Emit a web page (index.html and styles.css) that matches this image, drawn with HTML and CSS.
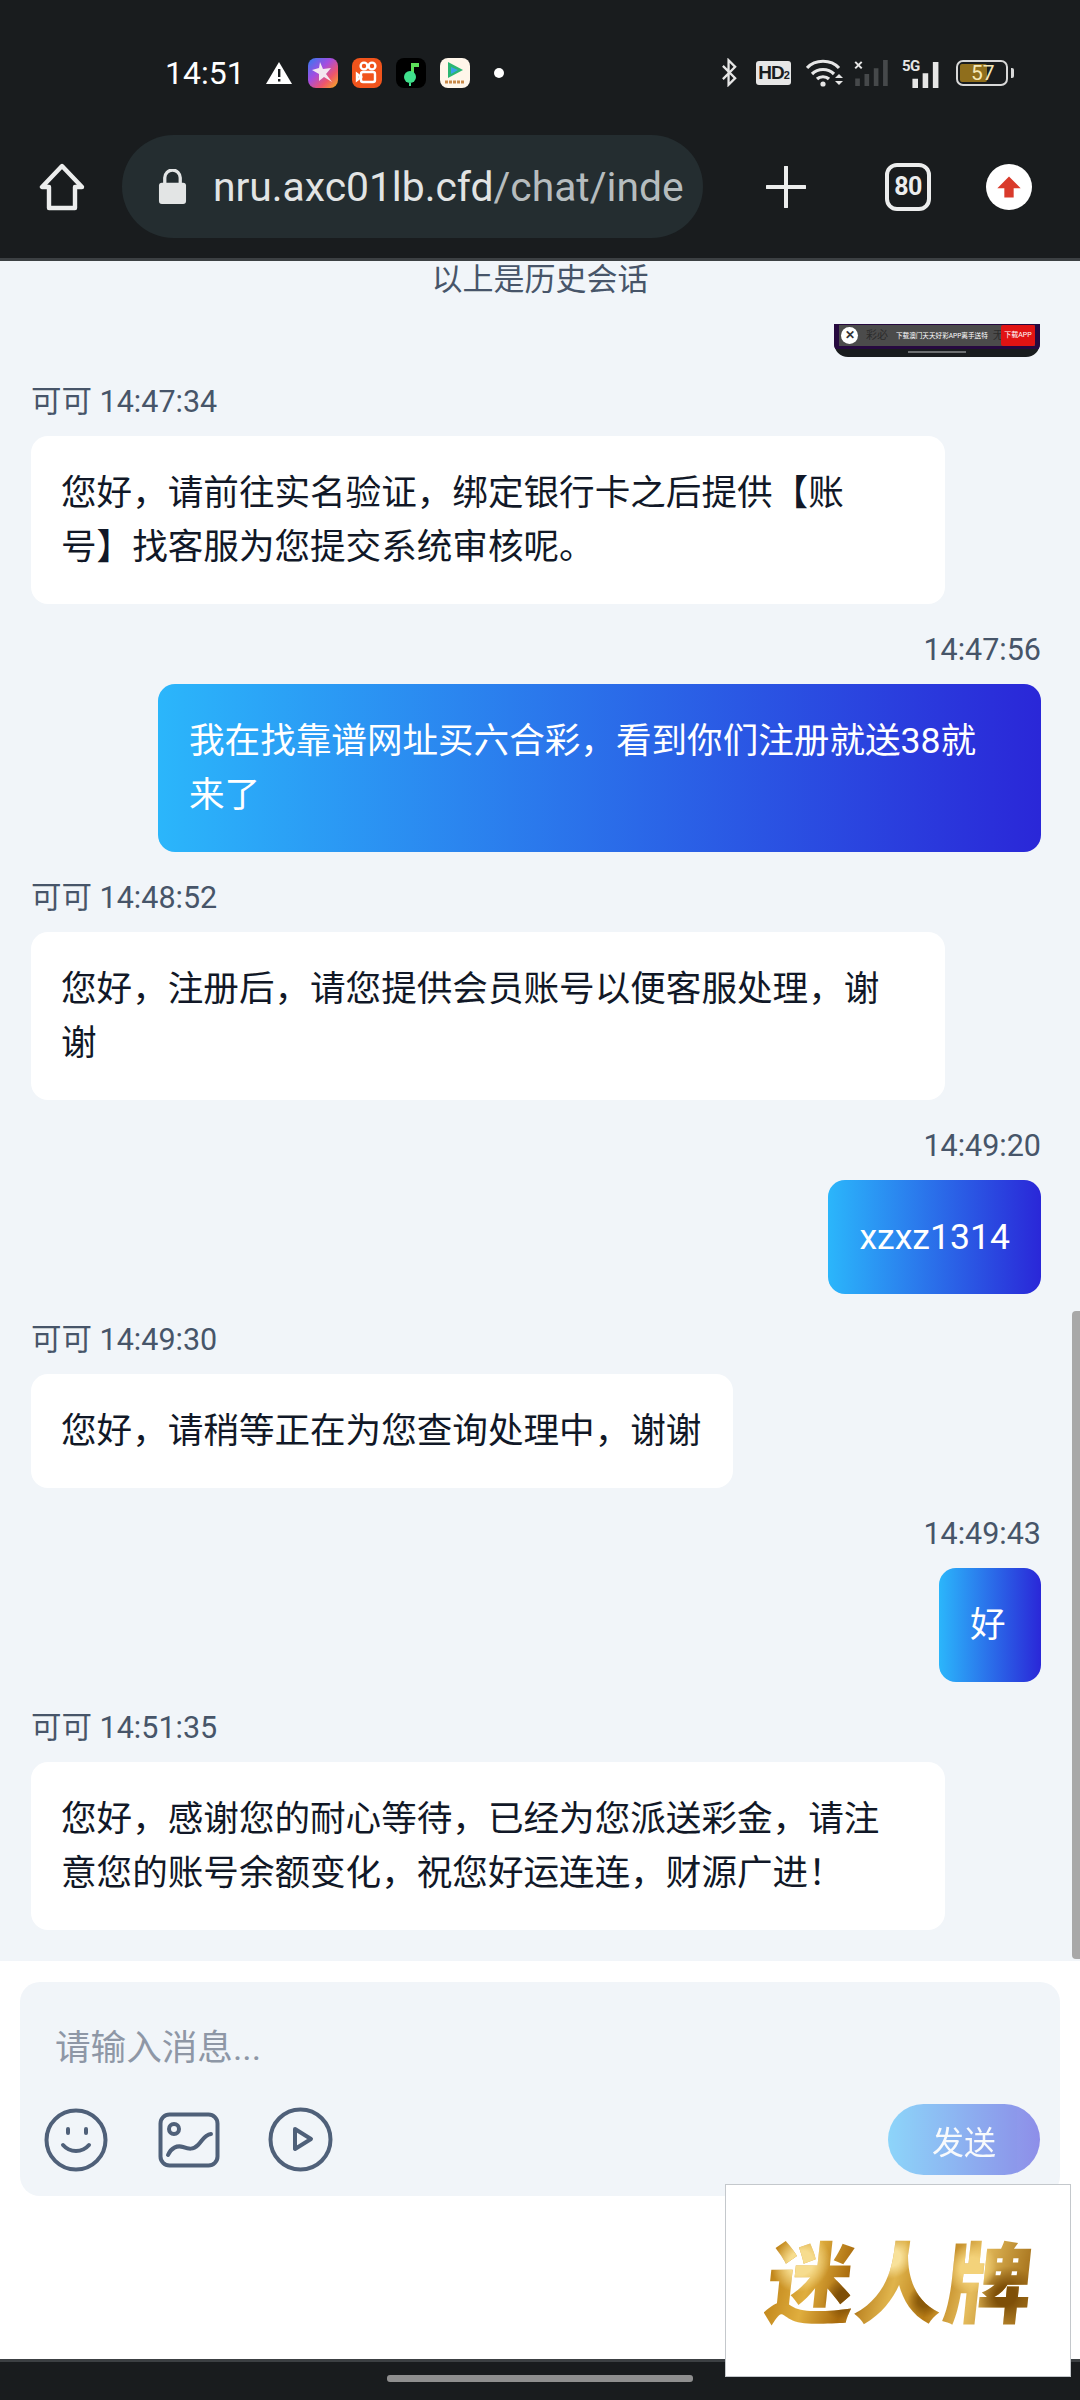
FILE: index.html
```html
<!DOCTYPE html>
<html lang="zh-CN">
<head>
<meta charset="UTF-8">
<meta name="viewport" content="width=device-width, initial-scale=1.0">
<title>在线客服</title>
<link rel="stylesheet" href="styles.css">
</head>
<body>

<header class="browser-top">
  <div class="status-bar">
    <span class="clock">14:51</span>
    <svg class="warn" viewBox="0 0 26 22"><path d="M13 0 26 22H0Z" fill="#fff"/><path d="M12 7h2.4v8H12ZM12 17h2.4v2.6H12Z" fill="#191c1e"/></svg>
    <div class="notif-icons">
      <span class="app app-star">
        <svg viewBox="0 0 30 30"><path d="M12 4l3 7 8-1-5 6 6 8-8-5-5 4 0-7-7-4 7-2Z" fill="#f3e6ef"/></svg>
      </span>
      <span class="app app-orange">
        <svg viewBox="0 0 30 30" fill="none" stroke="#fff" stroke-width="2.4"><circle cx="12" cy="8" r="3.4"/><circle cx="20" cy="8" r="3.4"/><rect x="9" y="14" width="14" height="10" rx="2"/><path d="M9 19 5 16v6Z"/></svg>
      </span>
      <span class="app app-black">
        <svg viewBox="0 0 30 30"><path d="M15 5h8v4h-5v10h-3Z" fill="#5de05a"/><circle cx="14" cy="19" r="6" fill="#3fe08c"/><path d="M14 25v3" stroke="#3fe08c" stroke-width="2"/></svg>
      </span>
      <span class="app app-white">
        <svg viewBox="0 0 30 30"><path d="M8 4 23 12 8 20Z" fill="#2bb673"/><path d="M11 9l7 3-7 4Z" fill="#3aa0e8"/><path d="M5 24h20" stroke="#c98a4a" stroke-width="3" stroke-dasharray="3 1"/></svg>
      </span>
    </div>
    <span class="dot"></span>

    <div class="sys-icons">
      <svg class="ic-bt" viewBox="0 0 18 30" fill="none" stroke="#e6e6e6" stroke-width="2.4"><path d="M2 8 15 21 8 28V2l7 7L2 22"/></svg>
      <span class="hd">HD<small>2</small></span>
      <svg class="ic-wifi" viewBox="0 0 38 30" fill="none" stroke="#e6e6e6" stroke-width="3.2"><path d="M1 10c8-9 24-9 32 0M6 16c6-6 16-6 22 0M11 21c3-3 9-3 12 0"/><circle cx="17" cy="26" r="2.6" fill="#e6e6e6" stroke="none"/><path d="M33 16l4 4h-8ZM29 23h8l-4 4Z" fill="#e6e6e6" stroke="none"/></svg>
      <svg class="ic-sig" viewBox="0 0 36 28"><path d="M1 20h5v8H1ZM11 15h5v13h-5ZM21 9h5v19h-5ZM31 0h5v28h-5Z" fill="#46494b"/><path d="M1 2l7 7M8 2 1 9" stroke="#e6e6e6" stroke-width="2.2"/></svg>
      <span class="sig-5g">
        <span class="tag-5g">5G</span>
        <svg viewBox="0 0 36 28"><path d="M3 18h6v10H3ZM14 12h6v16h-6ZM25 0h6v28h-6Z" fill="#e6e6e6" transform="translate(2 0)"/></svg>
      </span>
      <span class="battery"><span class="battery-fill"></span><span class="battery-num">57</span></span>
    </div>
  </div>

  <div class="toolbar">
    <svg class="ic-home" viewBox="0 0 46 48" fill="none" stroke="#eceded" stroke-width="4.4" stroke-linejoin="round"><path d="M23 3 3 24h7v21h26V24h7Z"/></svg>
    <div class="url-pill">
      <svg class="ic-lock" viewBox="0 0 30 36"><path d="M7 15V9a8 8 0 0 1 16 0v6" fill="none" stroke="#e3e5e5" stroke-width="3.4"/><rect x="1" y="14" width="28" height="22" rx="3" fill="#e3e5e5"/></svg>
      <span class="url"><b>nru.axc01lb.cfd</b>/chat/inde</span>
    </div>
    <svg class="ic-plus" viewBox="0 0 40 42"><path d="M20 1v40M1 21h38" stroke="#eceded" stroke-width="4" stroke-linecap="round"/></svg>
    <span class="tab-count">80</span>
    <span class="upgrade">
      <svg viewBox="0 0 24 24"><path d="M12 3 22 13h-6v8H8v-8H2Z" fill="#d93a2b"/></svg>
    </span>
  </div>
</header>

<main class="chat">
  <div class="history-note">以上是历史会话</div>

  <div class="thumb-row">
    <div class="thumb">
      <div class="thumb-top">
        <div class="thumb-ad">
          <span class="thumb-close">✕</span>
          <span class="thumb-under">彩必</span>
          <span class="thumb-text">下载澳门天天好彩APP离手送特</span>
          <span class="thumb-under">无</span>
          <span class="thumb-btn">下载APP</span>
        </div>
      </div>
      <div class="thumb-nav"><span></span></div>
    </div>
  </div>

  <div class="msg">
    <div class="msg-meta">可可 14:47:34</div>
    <div class="bubble">您好，请前往实名验证，绑定银行卡之后提供【账号】找客服为您提交系统审核呢。</div>
  </div>

  <div class="msg msg-me">
    <div class="msg-meta">14:47:56</div>
    <div class="bubble">我在找靠谱网址买六合彩，看到你们注册就送38就来了</div>
  </div>

  <div class="msg">
    <div class="msg-meta">可可 14:48:52</div>
    <div class="bubble">您好，注册后，请您提供会员账号以便客服处理，谢谢</div>
  </div>

  <div class="msg msg-me">
    <div class="msg-meta">14:49:20</div>
    <div class="bubble">xzxz1314</div>
  </div>

  <div class="msg">
    <div class="msg-meta">可可 14:49:30</div>
    <div class="bubble">您好，请稍等正在为您查询处理中，谢谢</div>
  </div>

  <div class="msg msg-me">
    <div class="msg-meta">14:49:43</div>
    <div class="bubble">好</div>
  </div>

  <div class="msg">
    <div class="msg-meta">可可 14:51:35</div>
    <div class="bubble">您好，感谢您的耐心等待，已经为您派送彩金，请注意您的账号余额变化，祝您好运连连，财源广进！</div>
  </div>

  <div class="scrollbar"></div>
</main>

<section class="composer">
  <div class="input-box">
    <div class="placeholder">请输入消息...</div>
    <div class="input-actions">
      <div class="input-icons">
        <svg class="ic-smile" viewBox="0 0 64 64" fill="none" stroke="#4f6079" stroke-width="4" stroke-linecap="round"><circle cx="32" cy="32" r="29.5"/><path d="M24 21v4M42 21v4M19 37c7 8 19 8 26 0"/></svg>
        <svg class="ic-image" viewBox="0 0 62 56" fill="none" stroke="#4f6079" stroke-width="4" stroke-linecap="round"><rect x="2.5" y="2.5" width="57" height="51" rx="9"/><circle cx="16" cy="17" r="5"/><path d="M10 43c3-7 9-10 15-8s10 3 15-2 6-10 13-11"/></svg>
        <svg class="ic-play" viewBox="0 0 65 65" fill="none" stroke="#4f6079" stroke-width="4" stroke-linejoin="round"><circle cx="32.5" cy="32.5" r="30"/><path d="M27 22 43 32 27 42Z"/></svg>
      </div>
      <button class="send-btn">发送</button>
    </div>
  </div>
</section>

<footer class="nav-bar"><span class="nav-pill"></span></footer>

<div class="brand-card"><span class="brand-text">迷人牌</span></div>

</body>
</html>
```

FILE: styles.css
```css
* {
  box-sizing: border-box;
}

body {
  margin: 0;
  width: 1080px;
  height: 2400px;
  overflow: hidden;
  position: relative;
  display: flex;
  flex-direction: column;
  background-color: #fff;
  font-family: Roboto, "Noto Sans CJK SC", sans-serif;
}

/* browser chrome */
.browser-top {
  background-color: #191c1e;
  height: 261px;
  border-bottom: 3px solid #3c4043;
  flex-shrink: 0;
}

.status-bar {
  height: 135px;
  padding: 10px 0 0 165px;
  display: flex;
  align-items: center;
  color: #fff;
}

.clock {
  font-size: 32px;
  font-weight: 400;
  width: 101px;
}

.warn {
  width: 26px;
  height: 22px;
  margin-right: 16px;
}

.notif-icons {
  display: flex;
  gap: 14px;
}

.app {
  width: 30px;
  height: 30px;
  border-radius: 8px;
  display: block;
  overflow: hidden;
}

.app svg {
  display: block;
  width: 30px;
  height: 30px;
}

.app-star {
  background: linear-gradient(135deg, #2f7bf0 0%, #a44de0 40%, #f0566a 70%, #f5b21c 100%);
}

.app-orange {
  background-color: #f1541c;
}

.app-black {
  background-color: #000;
}

.app-white {
  background-color: #fff6ea;
}

.dot {
  width: 10px;
  height: 10px;
  border-radius: 50%;
  background-color: #fff;
  margin-left: 24px;
}

.sys-icons {
  display: flex;
  align-items: center;
  margin-left: auto;
  padding-right: 72px;
  position: relative;
}

.ic-bt {
  width: 17px;
  height: 29px;
  margin-right: 18px;
}

.hd {
  width: 35px;
  height: 24px;
  border-radius: 3px;
  background-color: #e6e6e6;
  color: #191c1e;
  font-family: "Liberation Sans", sans-serif;
  font-size: 19px;
  font-weight: 700;
  line-height: 24px;
  text-align: center;
  margin-right: 15px;
  letter-spacing: -1px;
}

.hd small {
  font-size: 11px;
}

.ic-wifi {
  width: 38px;
  height: 30px;
  margin-right: 9px;
}

.ic-sig {
  width: 36px;
  height: 26px;
  margin-right: 14px;
}

.sig-5g {
  width: 39px;
  height: 30px;
  position: relative;
  margin-right: 14px;
}

.sig-5g svg {
  width: 39px;
  height: 26px;
  position: absolute;
  right: -2px;
  bottom: 0;
}

.tag-5g {
  position: absolute;
  left: -1px;
  top: -1px;
  font-size: 15px;
  font-weight: 700;
  color: #e6e6e6;
  letter-spacing: -0.5px;
  z-index: 1;
}

.battery {
  width: 52px;
  height: 26px;
  border: 2px solid #d8d8d8;
  border-radius: 7px;
  position: relative;
  padding: 2px;
  display: block;
}

.battery::after {
  content: "";
  position: absolute;
  right: -8px;
  top: 6px;
  width: 3px;
  height: 10px;
  background-color: #d8d8d8;
  border-radius: 0 2px 2px 0;
}

.battery-fill {
  display: block;
  width: 27px;
  height: 18px;
  background-color: #8f6e1c;
  border-radius: 2px;
}

.battery-num {
  position: absolute;
  left: 13px;
  top: -3px;
  font-size: 21px;
  line-height: 28px;
  color: #f5e8b8;
}

.toolbar {
  height: 123px;
  display: flex;
  align-items: flex-start;
  padding-left: 39px;
}

.ic-home {
  width: 46px;
  height: 48px;
  margin: 28px 37px 0 0;
}

.url-pill {
  width: 581px;
  height: 103px;
  border-radius: 52px;
  background-color: #242d30;
  display: flex;
  align-items: center;
  padding-left: 36px;
  overflow: hidden;
  white-space: nowrap;
  flex-shrink: 0;
}

.ic-lock {
  width: 29px;
  height: 35px;
  margin-right: 26px;
  flex-shrink: 0;
}

.url {
  font-size: 40.8px;
  color: #b6bcbe;
}

.url b {
  font-weight: 400;
  color: #e2e4e4;
}

.ic-plus {
  width: 40px;
  height: 42px;
  margin: 31px 79px 0 63px;
}

.tab-count {
  width: 46px;
  height: 48px;
  margin-top: 28px;
  border: 4px solid #eceded;
  border-radius: 12px;
  color: #eceded;
  font-size: 25px;
  font-weight: 700;
  line-height: 40px;
  text-align: center;
  letter-spacing: -0.5px;
}

.upgrade {
  width: 46px;
  height: 46px;
  margin: 29px 0 0 55px;
  border-radius: 50%;
  background-color: #fff;
  display: flex;
  align-items: center;
  justify-content: center;
}

.upgrade svg {
  width: 28px;
  height: 28px;
}

/* chat list */
.chat {
  height: 1700px;
  flex-shrink: 0;
  background-color: #f1f5f9;
  overflow: hidden;
  position: relative;
  padding: 0 40px 0 31px;
  color: #475569;
}

.history-note {
  font-size: 31px;
  line-height: 38px;
  text-align: center;
  padding-left: 9px;
  margin-bottom: 25px;
}

.thumb-row {
  display: flex;
  justify-content: flex-end;
  height: 33px;
  margin-bottom: 22px;
}

.thumb {
  width: 206px;
  height: 33px;
  background-color: #191c1e;
  border-radius: 0 0 14px 14px;
  overflow: hidden;
}

.thumb-top {
  height: 25px;
  padding: 1px 5px 3px;
  background-color: #26093f;
}

.thumb-ad {
  height: 21px;
  padding-left: 27px;
  padding-right: 34px;
  background-color: #4b4b4b;
  position: relative;
  display: flex;
  align-items: center;
  line-height: 20px;
  white-space: nowrap;
  overflow: hidden;
}

.thumb-close {
  position: absolute;
  left: 2px;
  top: 2px;
  width: 17px;
  height: 17px;
  border-radius: 50%;
  background-color: #fff;
  color: #333;
  font-size: 12px;
  font-weight: 700;
  line-height: 17px;
  text-align: center;
}

.thumb-under {
  color: #2b2b2b;
  font-size: 11px;
}

.thumb-text {
  margin: 0 5px 0 8px;
  color: #fff;
  font-size: 6.6px;
}

.thumb-btn {
  position: absolute;
  right: 0;
  top: 0;
  width: 34px;
  height: 21px;
  border-radius: 2px;
  background-color: #e11313;
  color: #fff;
  font-size: 7px;
  text-align: center;
}

.thumb-nav {
  padding-top: 2px;
  display: flex;
  justify-content: center;
}

.thumb-nav span {
  width: 58px;
  height: 2px;
  background-color: #6d6f71;
}

.msg {
  display: flex;
  flex-direction: column;
  align-items: flex-start;
  margin-bottom: 23px;
}

.msg-meta {
  font-size: 30.5px;
  line-height: 46px;
  margin-bottom: 11px;
}

.bubble {
  max-width: 914px;
  padding: 30px 32px 30px 30px;
  border-radius: 17px;
  background-color: #fff;
  color: #111827;
  font-size: 35.6px;
  line-height: 54px;
  text-spacing-trim: space-all;
}

.msg-me {
  align-items: flex-end;
  margin-right: -1px;
}

.msg-me .bubble {
  max-width: 883px;
  min-width: 102px;
  padding: 30px 31px;
  background: linear-gradient(90deg, #2bb6fb, #2a27d8);
  color: #fff;
}

.scrollbar {
  position: absolute;
  right: 0;
  top: 1050px;
  width: 8px;
  height: 648px;
  border-radius: 4px 0 0 4px;
  background-color: #a8a8a8;
}

/* message input */
.composer {
  height: 398px;
  flex-shrink: 0;
  padding: 21px 20px 0;
  background-color: #fff;
}

.input-box {
  height: 214px;
  border-radius: 20px;
  background-color: #f1f5f9;
  padding: 46px 20px 0 25px;
}

.placeholder {
  padding-left: 10px;
  font-size: 35.6px;
  line-height: 40px;
  color: #8e97a6;
}

.input-actions {
  display: flex;
  justify-content: space-between;
  align-items: center;
  margin-top: 36px;
}

.input-icons {
  display: flex;
  align-items: center;
}

.input-icons svg {
  display: block;
}

.ic-smile {
  width: 64px;
  height: 64px;
  margin-left: -1px;
  margin-right: 50px;
}

.ic-image {
  width: 62px;
  height: 56px;
  margin-right: 48px;
}

.ic-play {
  width: 65px;
  height: 65px;
}

.send-btn {
  width: 152px;
  height: 71px;
  border: none;
  border-radius: 36px;
  background: linear-gradient(90deg, #2bb6fb, #2a27d8);
  opacity: 0.5;
  color: #fff;
  font-family: inherit;
  font-size: 32px;
  padding: 0;
}

.nav-bar {
  flex: 1;
  background-color: #191c1e;
  border-top: 3px solid #3c4043;
  display: flex;
  justify-content: center;
  padding-top: 13px;
}

.nav-pill {
  width: 306px;
  height: 7px;
  border-radius: 3px;
  background-color: #8f8f8f;
}

/* floating brand image */
.brand-card {
  position: absolute;
  left: 725px;
  top: 2184px;
  width: 346px;
  height: 193px;
  background-color: #fff;
  border: 1px solid #c4c8cc;
  display: flex;
  align-items: center;
  justify-content: center;
  padding-left: 6px;
}

.brand-text {
  font-family: "Noto Sans CJK SC", sans-serif;
  font-size: 88px;
  font-weight: 900;
  line-height: 100px;
  letter-spacing: 1px;
  transform: skewX(-6deg) translateY(-3px);
  background:
    radial-gradient(circle at 12% 35%, #f6dc8e 0 5%, transparent 12%),
    radial-gradient(circle at 30% 70%, #7e4f08 0 4%, transparent 11%),
    radial-gradient(circle at 46% 30%, #f8e19a 0 5%, transparent 13%),
    radial-gradient(circle at 60% 72%, #8a5a0a 0 4%, transparent 10%),
    radial-gradient(circle at 76% 40%, #f3d27a 0 5%, transparent 12%),
    radial-gradient(circle at 90% 68%, #7e4f08 0 4%, transparent 12%),
    linear-gradient(100deg, #b87a10 0%, #e0ae3e 18%, #a86a0c 32%, #e0b44c 48%, #b67a14 62%, #e5bc5c 76%, #96600c 100%);
  -webkit-background-clip: text;
  background-clip: text;
  color: transparent;
}
```
